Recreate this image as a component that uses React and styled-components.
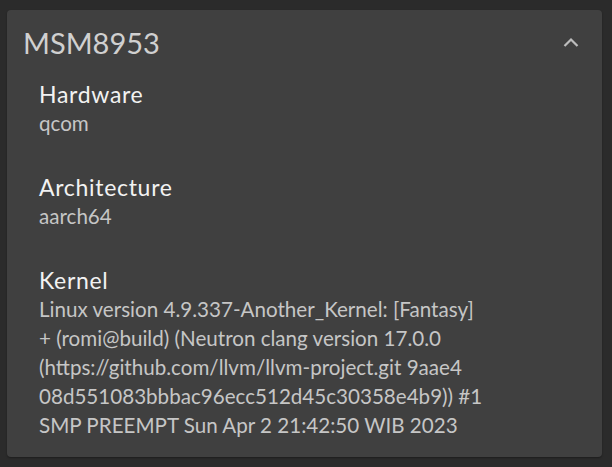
import React from 'react';
import styled, { createGlobalStyle } from 'styled-components';

const GlobalStyle = createGlobalStyle`
	html, body {
		margin: 0;
		padding: 0;
		background: #2b2b2b;
	}
	body {
		font-family: 'Lato', 'Noto Sans', sans-serif;
	}
`;

const Page = styled.div`
	width: 612px;
	height: 467px;
	padding: 10px 10px 10px 7px;
	box-sizing: border-box;
	background: #2b2b2b;
`;

const Card = styled.section`
	width: 595px;
	height: 447px;
	box-sizing: border-box;
	background: #404040;
	border-radius: 4px;
	box-shadow: 0 1px 2px rgba(0, 0, 0, 0.35);
	padding: 15px 22px 0 16px;
`;

const Header = styled.div`
	display: flex;
	align-items: center;
	justify-content: space-between;
	height: 36px;
`;

const Title = styled.h2`
	margin: 0;
	font-size: 29px;
	line-height: 36px;
	font-weight: 400;
	color: #d0d0d0;
`;

const Chevron = styled.svg`
	width: 18px;
	height: 18px;
`;

const Body = styled.div`
	display: flex;
	flex-direction: column;
	gap: 34px;
	padding: 18px 0 0 16px;
`;

const Field = styled.div`
	display: flex;
	flex-direction: column;
`;

const Label = styled.div`
	font-size: 23px;
	line-height: 30px;
	letter-spacing: 0.7px;
	color: #f2f2f2;
`;

const Value = styled.div`
	font-size: 20.6px;
	line-height: 29px;
	color: #c6c6c6;
	white-space: pre-line;
`;

const fields = [
	{ label: 'Hardware', value: 'qcom' },
	{ label: 'Architecture', value: 'aarch64' },
	{
		label: 'Kernel',
		value:
			'Linux version 4.9.337-Another_Kernel: [Fantasy]\n+ (romi@build) (Neutron clang version 17.0.0\n(https://github.com/llvm/llvm-project.git 9aae4\n08d551083bbbac96ecc512d45c30358e4b9)) #1\nSMP PREEMPT Sun Apr 2 21:42:50 WIB 2023',
	},
];

const App = () => {
	return (
		<>
			<GlobalStyle />
			<Page>
				<Card>
					<Header>
						<Title>MSM8953</Title>
						<Chevron viewBox='0 0 18 18'>
							<path
								d='M2.5 12 L9 5.5 L15.5 12'
								fill='none'
								stroke='#bdbdbd'
								strokeWidth='2.2'
							/>
						</Chevron>
					</Header>
					<Body>
						{fields.map((f) => (
							<Field key={f.label}>
								<Label>{f.label}</Label>
								<Value>{f.value}</Value>
							</Field>
						))}
					</Body>
				</Card>
			</Page>
		</>
	);
};

export default App;
